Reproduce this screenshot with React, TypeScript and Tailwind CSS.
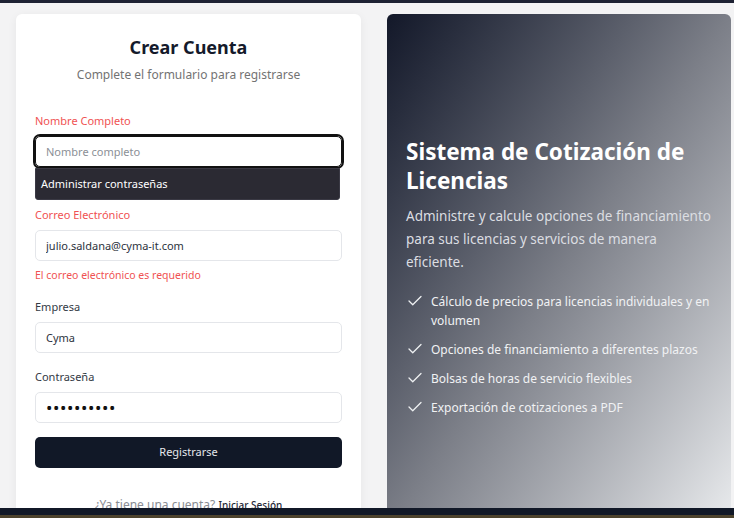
import { Check } from "lucide-react";

const FEATURES = [
  "Cálculo de precios para licencias individuales y en volumen",
  "Opciones de financiamiento a diferentes plazos",
  "Bolsas de horas de servicio flexibles",
  "Exportación de cotizaciones a PDF",
];

function Field({
  label,
  value,
  placeholder,
  error,
  invalid,
  password,
  focused,
  className = "",
}: {
  label: string;
  value?: string;
  placeholder?: string;
  error?: string;
  invalid?: boolean;
  password?: boolean;
  focused?: boolean;
  className?: string;
}) {
  return (
    <div className={`relative flex flex-col ${className}`}>
      <label
        className={`text-[11px] leading-4 ${invalid ? "text-[#f05252]" : "text-[#333a45]"}`}
      >
        {label}
      </label>
      <input
        readOnly
        type="text"
        value={value}
        placeholder={placeholder}
        className={`mt-[7px] h-[31px] w-full rounded-[5px] border bg-white px-[10px] text-[#2d333d] placeholder:text-[#8b8f96] ${
          focused
            ? "border-[#111] outline-2 outline-offset-0 outline-[#111]"
            : "border-[#e4e6ea]"
        } ${password ? "text-[17px] tracking-[0.6px] text-[#111]" : "text-[11px]"}`}
      />
      {error && (
        <p className="mt-[6px] text-[10.5px] leading-4 text-[#f05252]">{error}</p>
      )}
    </div>
  );
}

export default function App() {
  return (
    <div
      className="flex h-[518px] w-[734px] flex-col overflow-hidden bg-[#f3f3f4]"
      style={{ fontFamily: '"Noto Sans", "Open Sans", sans-serif' }}
    >
      <div className="h-[3px] bg-[#1e2233]" />
      <div className="flex min-h-0 flex-1 gap-[26px] overflow-hidden pl-4 pt-[11px]">
        {/* form card */}
        <div className="h-[520px] w-[345px] shrink-0 rounded-[6px] bg-white px-[19px] pt-[21px] shadow-[0_2px_10px_rgba(0,0,0,0.06)]">
          <h1 className="text-center text-[18px] leading-6 font-bold text-[#141a2b]">
            Crear Cuenta
          </h1>
          <p className="mt-[6px] text-center text-[12px] leading-5 text-[#737373]">
            Complete el formulario para registrarse
          </p>

          <div className="relative mt-[28px]">
            <Field label="Nombre Completo" placeholder="Nombre completo" invalid focused />
            {/* error line sits under the browser popup */}
            <div className="mt-[6px] h-4" />
            <div className="absolute top-[55px] left-0 right-[2px] flex h-[32px] items-center rounded-b-[3px] border border-[#3a3944] bg-[#2b2a33] px-[5px] text-[11px] text-white">
              Administrar contraseñas
            </div>
          </div>

          <Field
            className="mt-[18px]"
            label="Correo Electrónico"
            value="julio.saldana@cyma-it.com"
            invalid
            error="El correo electrónico es requerido"
          />
          <Field className="mt-4" label="Empresa" value="Cyma" />
          <Field className="mt-4" label="Contraseña" value="••••••••••" password />

          <button className="mt-[14px] h-[31px] w-full rounded-[5px] bg-[#111827] text-[11px] text-[#e5e7eb]">
            Registrarse
          </button>

          <p className="mt-[28px] text-center text-[12px] text-[#8a8d93]">
            ¿Ya tiene una cuenta?{" "}
            <span className="text-[10px] font-medium text-[#1f2937]">Iniciar Sesión</span>
          </p>
        </div>

        {/* info panel */}
        <div className="h-[520px] w-[344px] shrink-0 rounded-[6px] bg-gradient-to-br from-[#131829] via-[#7c7f88] to-[#eceef0] px-[19px] pt-[123px] text-white">
          <h2 className="text-[22.5px] leading-[29px] font-bold">
            Sistema de Cotización de Licencias
          </h2>
          <p className="mt-[10px] w-[307px] text-[13.5px] leading-[23px] text-[#dcdee2]">
            Administre y calcule opciones de financiamiento para sus licencias y
            servicios de manera eficiente.
          </p>
          <ul className="mt-[18px] flex flex-col gap-[10px]">
            {FEATURES.map((f) => (
              <li key={f} className="flex items-start gap-[7px]">
                <Check size={18} strokeWidth={1.75} className="shrink-0 text-[#eef0f2]" />
                <span className="text-[12px] leading-[19px] text-[#f1f2f4]">{f}</span>
              </li>
            ))}
          </ul>
        </div>
      </div>
      <div className="h-[7px] shrink-0 bg-[#111827]" />
      <div className="h-[3px] shrink-0 bg-[#4d432d]" />
    </div>
  );
}
